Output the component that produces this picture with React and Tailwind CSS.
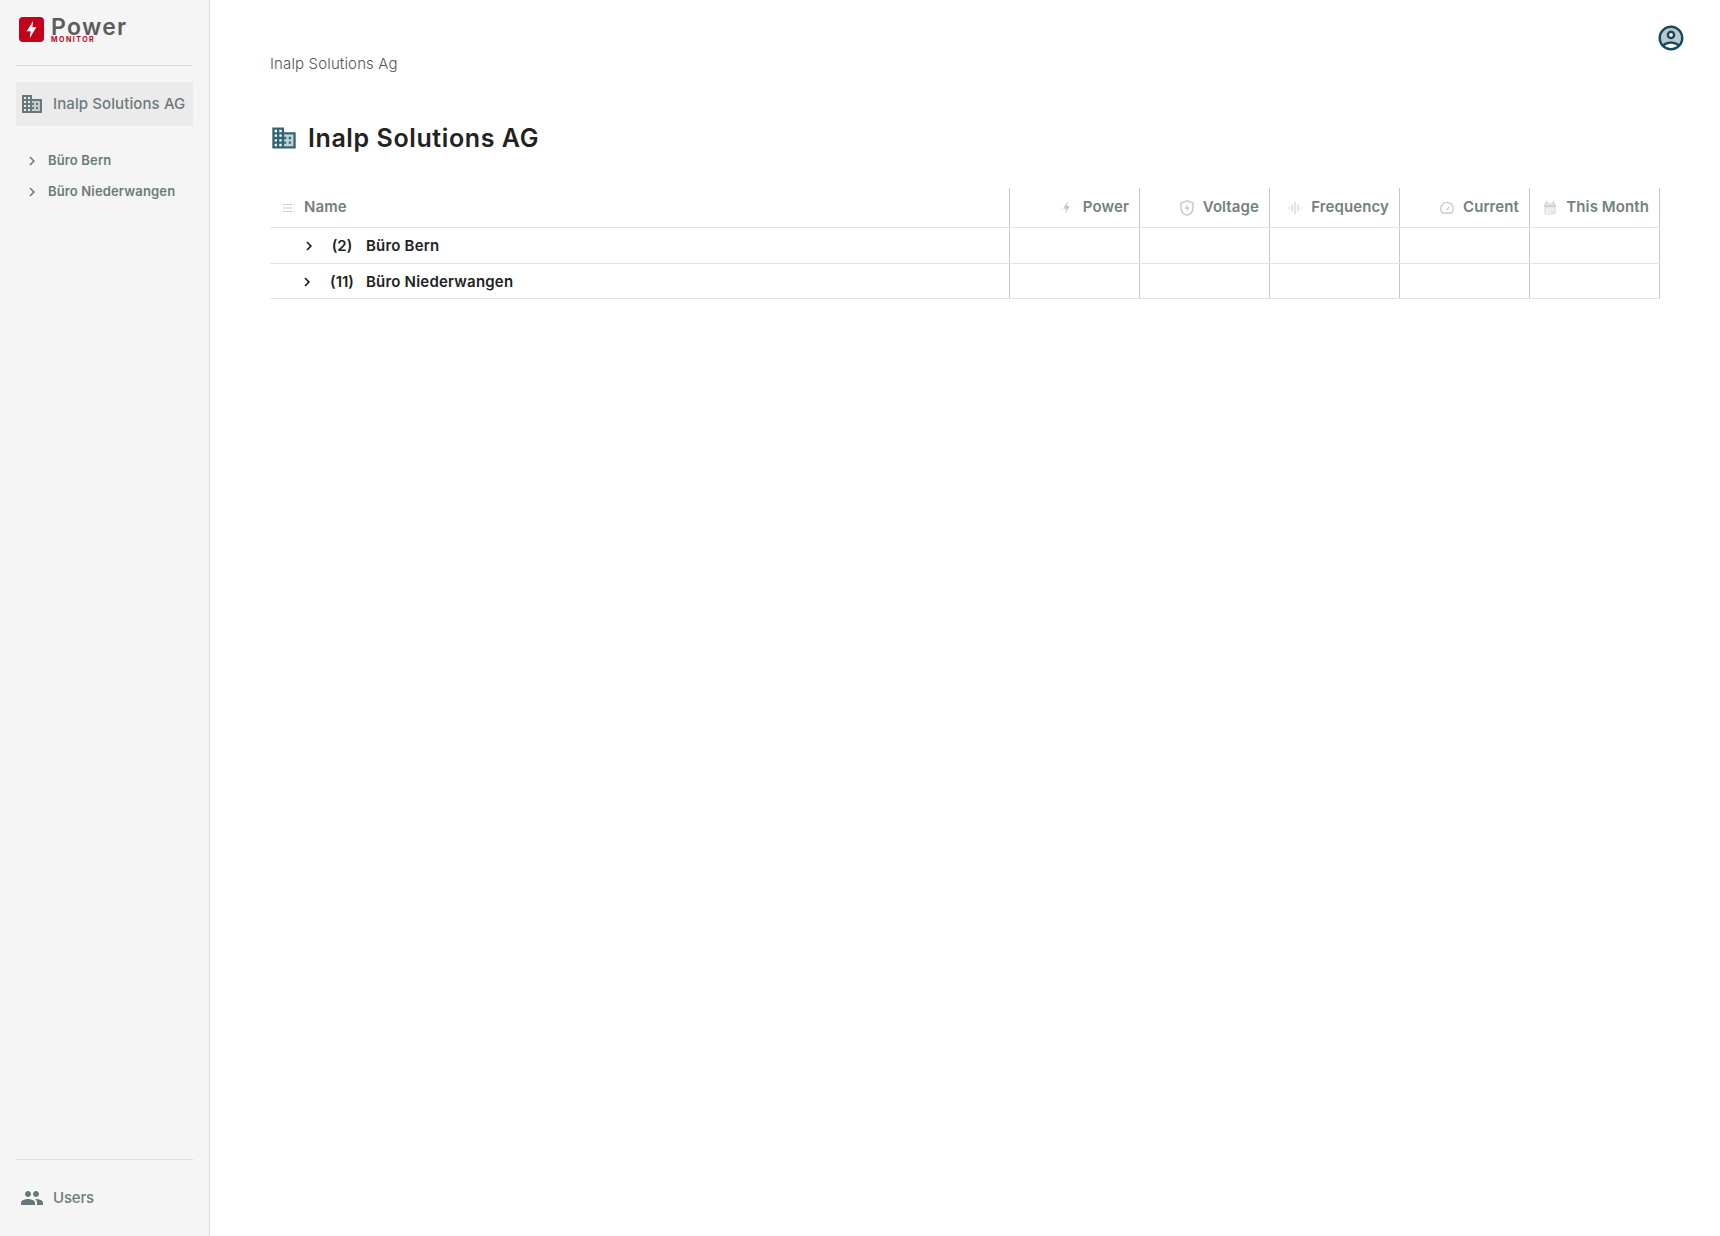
import React from 'react';

// Material two-tone / filled glyphs used through the page
const DomainIcon = ({ className }) => (
  <svg viewBox="0 0 24 24" fill="currentColor" className={className}>
    <path opacity=".3" d="M12 11h2v2h-2v2h2v2h-2v2h8V9h-8v2zm4 0h2v2h-2v-2zm0 4h2v2h-2v-2z" />
    <path d="M12 7V3H2v18h20V7H12zM6 19H4v-2h2v2zm0-4H4v-2h2v2zm0-4H4V9h2v2zm0-4H4V5h2v2zm4 12H8v-2h2v2zm0-4H8v-2h2v2zm0-4H8V9h2v2zm0-4H8V5h2v2zm10 12h-8v-2h2v-2h-2v-2h2v-2h-2V9h8v10zm-2-8h-2v2h2v-2zm0 4h-2v2h2v-2z" />
  </svg>
);

const AccountIcon = ({ className }) => (
  <svg viewBox="0 0 24 24" fill="currentColor" className={className}>
    <path opacity=".3" d="M12 4c-4.41 0-8 3.59-8 8 0 1.82.62 3.49 1.64 4.83 1.43-1.74 4.9-2.33 6.36-2.33s4.93.59 6.36 2.33C19.38 15.49 20 13.82 20 12c0-4.41-3.59-8-8-8zm0 9c-1.94 0-3.5-1.56-3.5-3.5S10.06 6 12 6s3.5 1.56 3.5 3.5S13.94 13 12 13z" />
    <path d="M12 2C6.48 2 2 6.48 2 12s4.48 10 10 10 10-4.48 10-10S17.52 2 12 2zM7.07 18.28c.43-.9 3.05-1.78 4.93-1.78s4.51.88 4.93 1.78C15.57 19.36 13.86 20 12 20s-3.57-.64-4.93-1.72zm11.29-1.45c-1.43-1.74-4.9-2.33-6.36-2.33s-4.93.59-6.36 2.33C4.62 15.49 4 13.82 4 12c0-4.41 3.59-8 8-8s8 3.59 8 8c0 1.82-.62 3.49-1.64 4.83zM12 6c-1.94 0-3.5 1.56-3.5 3.5S10.06 13 12 13s3.5-1.56 3.5-3.5S13.94 6 12 6zm0 5c-.83 0-1.5-.67-1.5-1.5S11.17 8 12 8s1.5.67 1.5 1.5S12.83 11 12 11z" />
  </svg>
);

const PeopleIcon = ({ className }) => (
  <svg viewBox="0 0 24 24" fill="currentColor" className={className}>
    <path d="M16 11c1.66 0 2.99-1.34 2.99-3S17.66 5 16 5c-1.66 0-3 1.34-3 3s1.34 3 3 3zm-8 0c1.66 0 2.99-1.34 2.99-3S9.66 5 8 5C6.34 5 5 6.34 5 8s1.34 3 3 3zm0 2c-2.33 0-7 1.17-7 3.5V19h14v-2.5c0-2.33-4.67-3.5-7-3.5zm8 0c-.29 0-.62.02-.97.05 1.16.84 1.97 1.97 1.97 3.45V19h6v-2.5c0-2.33-4.67-3.5-7-3.5z" />
  </svg>
);

const Chevron = ({ className }) => (
  <svg viewBox="0 0 24 24" fill="currentColor" className={className}>
    <path d="M10 6 8.59 7.41 13.17 12l-4.58 4.59L10 18l6-6z" />
  </svg>
);

const ReorderIcon = ({ className }) => (
  <svg viewBox="0 0 14 14" fill="currentColor" className={className}>
    <path d="M1 3h9v1H1zM1 6.5h9v1H1zM1 10h9v1H1zM12 3h1v1h-1zM12 6.5h1v1h-1zM12 10h1v1h-1z" />
  </svg>
);

const BoltIcon = ({ className }) => (
  <svg viewBox="0 0 24 24" fill="currentColor" className={className}>
    <path d="M14 2 6.5 14H11l-1 8 7.5-12.5H13z" />
  </svg>
);

const ShieldIcon = ({ className }) => (
  <svg viewBox="0 0 24 24" fill="none" stroke="currentColor" strokeWidth="2" className={className}>
    <path d="M12 2.5 4 5.5v6c0 5 3.4 8.8 8 10 4.6-1.2 8-5 8-10v-6z" />
    <path d="M13 6.5 8.5 13H12l-1 4.5 4.5-6.5H12z" fill="currentColor" stroke="none" />
  </svg>
);

const WaveIcon = ({ className }) => (
  <svg viewBox="0 0 24 24" fill="none" stroke="currentColor" strokeWidth="1.6" className={className}>
    <path d="M3 11v2M7.5 7v10M12 3v18M16.5 7v10M21 11v2" />
  </svg>
);

const GaugeIcon = ({ className }) => (
  <svg viewBox="0 0 24 24" fill="none" stroke="currentColor" strokeWidth="2" className={className}>
    <path d="M5 19.5h14a9.5 9.5 0 1 0-14 0z" strokeLinejoin="round" />
    <path d="m11.5 15 4-5" />
  </svg>
);

const CalendarIcon = ({ className }) => (
  <svg viewBox="0 0 24 24" className={className}>
    <rect x="3" y="4" width="18" height="18" rx="2" fill="currentColor" opacity=".45" />
    <path d="M3 9h18M7 2v4M17 2v4" stroke="currentColor" strokeWidth="2" />
    <path d="M7 13h2v2H7zM11 13h2v2h-2zM15 13h2v2h-2zM7 17h2v2H7zM11 17h2v2h-2z" fill="#fff" />
  </svg>
);

const columns = [
  { label: 'Power', icon: BoltIcon, size: 'w-[15px] h-[15px]' },
  { label: 'Voltage', icon: ShieldIcon, size: 'w-[18px] h-[18px]' },
  { label: 'Frequency', icon: WaveIcon, size: 'w-[16px] h-[16px]' },
  { label: 'Current', icon: GaugeIcon, size: 'w-[16px] h-[16px]' },
  { label: 'This Month', icon: CalendarIcon, size: 'w-[16px] h-[16px]' },
];

const sites = [
  { name: 'Büro Bern', count: 2 },
  { name: 'Büro Niederwangen', count: 11 },
];

const rowGrid = 'grid grid-cols-[740px_repeat(5,130px)] border-b border-[#e2e4e4]';

const App = () => {
  return (
    <div className="flex h-[1236px] bg-white font-['Inter',sans-serif] overflow-hidden">
      {/* Seitenleiste */}
      <aside className="flex w-[210px] shrink-0 flex-col border-r border-[#dcdcdc] bg-[#f5f5f5] px-4">
        <div className="flex h-[66px] items-start border-b border-[#dedede] pt-[17px]">
          <div className="ml-[3px] flex h-[25px] w-[25px] items-center justify-center rounded-[4px] bg-[#c4001a]">
            <BoltIcon className="h-[21px] w-[21px] text-white" />
          </div>
          <div className="ml-[7px] mt-[2px] flex flex-col">
            <span className="text-[23px] leading-[16px] font-semibold tracking-[1.3px] text-[#5c5c5c]">Power</span>
            <span className="mt-[1px] text-[7px] leading-[8px] font-bold tracking-[1.5px] text-[#c4001a]">MONITOR</span>
          </div>
        </div>

        <div className="mt-4 flex h-[44px] items-center bg-[#ebebeb] pl-[4px]">
          <DomainIcon className="h-6 w-6 text-[#66787a]" />
          <span className="ml-[9px] text-[15px] font-medium tracking-[0.1px] whitespace-nowrap text-[#6b7b7c]">Inalp Solutions AG</span>
        </div>

        <div className="mt-[26px] flex flex-col gap-[13px]">
          {sites.map((site) => (
            <div key={site.name} className="flex h-[18px] items-center pl-[7px]">
              <Chevron className="h-[18px] w-[18px] text-[#6b7b7c]" />
              <span className="ml-[7px] text-[13px] font-semibold tracking-[0.15px] whitespace-nowrap text-[#6b7b7c]">{site.name}</span>
            </div>
          ))}
        </div>

        <div className="mt-auto flex h-[77px] items-center border-t border-[#dedede]">
          <PeopleIcon className="ml-[4px] h-6 w-6 text-[#66787a]" />
          <span className="ml-[9px] text-[15px] font-medium tracking-[-0.2px] text-[#6b7b7c]">Users</span>
        </div>
      </aside>

      {/* Hauptbereich */}
      <main className="relative flex-1 pl-[60px]">
        <AccountIcon className="absolute top-[23px] right-[34px] h-[30px] w-[30px] text-[#17475c]" />

        <p className="pt-[54px] text-[15px] leading-[19px] font-light tracking-[0.14px] text-[#555]">Inalp Solutions Ag</p>

        <div className="mt-[47px] flex items-center">
          <DomainIcon className="h-[28px] w-[28px] text-[#2f6470]" />
          <h1 className="ml-[10px] text-[25px] leading-[36px] font-semibold tracking-[0.6px] text-[#222]">Inalp Solutions AG</h1>
        </div>

        <div className="mt-[32px] w-[1390px]">
          <div className={`${rowGrid} h-[40px]`}>
            <div className="flex items-center border-r border-[#c8c8c8] pl-3">
              <ReorderIcon className="h-[14px] w-[14px] text-[#c5cacb]" />
              <span className="ml-[8px] text-[15px] font-semibold tracking-[0.1px] text-[#748080]">Name</span>
            </div>
            {columns.map((col) => {
              const Icon = col.icon;
              return (
                <div key={col.label} className="flex items-center justify-end gap-[6px] border-r border-[#c8c8c8] pr-[10px]">
                  <span className="flex h-5 w-5 items-center justify-center">
                    <Icon className={`${col.size} text-[#c5cacb]`} />
                  </span>
                  <span className="text-[15px] font-semibold tracking-[0.1px] whitespace-nowrap text-[#748080]">{col.label}</span>
                </div>
              );
            })}
          </div>

          {sites.map((site) => (
            <div key={site.name} className={`${rowGrid} h-[35.5px]`}>
              <div className="flex items-center border-r border-[#c8c8c8] pt-[2px]">
                <Chevron className={`h-[18px] w-[18px] text-[#111] ${site.count > 9 ? 'ml-[28px] mr-[2px]' : 'ml-[30px]'}`} />
                <span className="w-[48px] text-center text-[15px] font-semibold text-[#222]">({site.count})</span>
                <span className="text-[15px] font-semibold tracking-[0.2px] text-[#222]">{site.name}</span>
              </div>
              {columns.map((col) => (
                <div key={col.label} className="border-r border-[#c8c8c8]" />
              ))}
            </div>
          ))}
        </div>
      </main>
    </div>
  );
};

export default App;
